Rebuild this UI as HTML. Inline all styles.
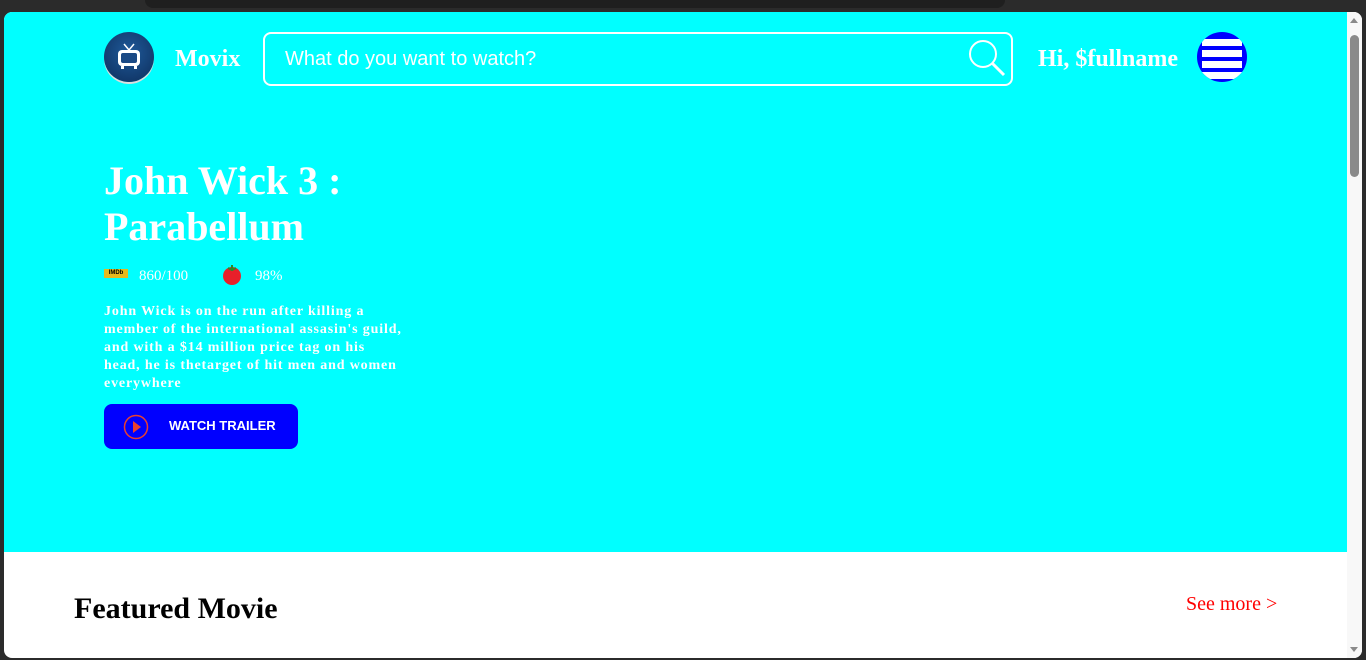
<!DOCTYPE html>
<html><head><meta charset="utf-8"><style>
*{margin:0;padding:0;box-sizing:border-box}
html,body{width:1366px;height:660px;overflow:hidden;background:#2b2b2b;font-family:"Liberation Serif",serif}
.top{position:absolute;left:0;top:0;width:1366px;height:12px;background:#2b2b2b}
.tab{position:absolute;left:145px;top:0;width:860px;height:8px;background:#1f1f1f;border-radius:0 0 10px 10px}
.page{position:absolute;left:4px;top:12px;width:1358px;height:646px;background:#fff;border-radius:8px 8px 8px 8px;overflow:hidden}
.hero{position:absolute;left:0;top:0;width:1343px;height:540px;background:#00ffff}
.sb{position:absolute;right:0;top:0;width:15px;height:646px;background:#f8f8f8}
.thumb{position:absolute;left:3px;top:23px;width:9px;height:142px;background:#8a8a8a;border-radius:5px}
.logo{position:absolute;left:100px;top:20px;width:50px;height:50px;border-radius:50%;background:radial-gradient(circle at 50% 40%,#1f5a9a,#0d2d5a);box-shadow:0 2px 0 #ddd}
.brand{position:absolute;left:171px;top:34px;font-size:24px;font-weight:bold;color:#fff}
.search{position:absolute;left:259px;top:20px;width:750px;height:54px;border:2px solid #fff;border-radius:8px}
.search span{position:absolute;left:20px;top:14px;font-family:"Liberation Sans",sans-serif;font-size:20px;color:#fff}
.hi{position:absolute;left:1034px;top:34px;font-size:24px;font-weight:bold;color:#fff}
.menu{position:absolute;left:1193px;top:20px;width:50px;height:50px;border-radius:50%;background:#0000ff;overflow:hidden}
.menu i{position:absolute;left:5px;width:40px;height:7px;background:#fff}
h1{position:absolute;left:100px;top:146px;font-size:40px;line-height:46px;color:#fff;font-weight:bold}
.rate{position:absolute;top:256px;font-size:15px;color:#fff}
.desc{position:absolute;left:100px;top:291px;width:300px;font-size:14px;letter-spacing:0.85px;line-height:18px;font-weight:bold;color:#fff}
.btn{position:absolute;left:100px;top:392px;width:194px;height:45px;background:#0000ff;border-radius:8px}
.btn span{position:absolute;left:65px;top:14px;font-family:"Liberation Sans",sans-serif;font-weight:bold;font-size:13px;color:#fff}
.feat{position:absolute;left:70px;top:580px;font-size:30px;font-weight:bold;color:#000}
.more{position:absolute;left:1182px;top:581px;font-size:20px;color:#f00}
</style></head><body>
<div class="top"><div class="tab"></div></div>
<div class="page">
<div class="hero">
<div class="logo"><svg width="50" height="50" viewBox="0 0 50 50"><path d="M20 12l5 6 5-6" stroke="#fff" stroke-width="1.5" fill="none"/><rect x="14" y="18" width="22" height="16" rx="4" fill="#fff"/><rect x="17" y="21" width="16" height="10" rx="2" fill="#1a4a85"/><rect x="17" y="34" width="3" height="3" fill="#fff"/><rect x="30" y="34" width="3" height="3" fill="#fff"/></svg></div>
<div class="brand">Movix</div>
<div class="search"><span>What do you want to watch?</span>
<svg style="position:absolute;right:2px;top:2px" width="44" height="44" viewBox="0 0 44 44"><circle cx="18" cy="18" r="13" stroke="#fff" stroke-width="2" fill="none"/><path d="M27 27l12 12" stroke="#fff" stroke-width="3"/></svg></div>
<div class="hi">Hi, $fullname</div>
<div class="menu"><i style="top:7px"></i><i style="top:18px"></i><i style="top:29px"></i><i style="top:40px"></i></div>
<h1>John Wick 3 :<br>Parabellum</h1>
<div style="position:absolute;left:100px;top:257px;width:24px;height:9px;background:#e6b91e;font:bold 6px 'Liberation Sans',sans-serif;color:#000;text-align:center;line-height:9px">IMDb</div>
<div class="rate" style="left:135px">860/100</div>
<svg style="position:absolute;left:218px;top:251px" width="20" height="22" viewBox="0 0 20 22"><circle cx="10" cy="13" r="9" fill="#e8202a"/><path d="M6 5l4 2 4-2M10 7V2" stroke="#2a8a2a" stroke-width="2" fill="none"/></svg>
<div class="rate" style="left:251px">98%</div>
<div class="desc">John Wick is on the run after killing a member of the international assasin's guild, and with a $14 million price tag on his head, he is thetarget of hit men and women everywhere</div>
<div class="btn"><svg style="position:absolute;left:19px;top:10px" width="26" height="26" viewBox="0 0 26 26"><circle cx="13" cy="13" r="11.5" stroke="#e84030" stroke-width="1.5" fill="none"/><path d="M10 7l8 6-8 6z" fill="#e84030"/></svg><span>WATCH TRAILER</span></div>
</div>
<div class="feat">Featured Movie</div>
<div class="more">See more &gt;</div>
<div class="sb"><div style="position:absolute;left:3px;top:6px;border:4px solid transparent;border-bottom:5px solid #8a8a8a;border-top:0"></div><div class="thumb"></div><div style="position:absolute;left:3px;bottom:6px;border:4px solid transparent;border-top:5px solid #8a8a8a;border-bottom:0"></div></div>
</div>
</body></html>
